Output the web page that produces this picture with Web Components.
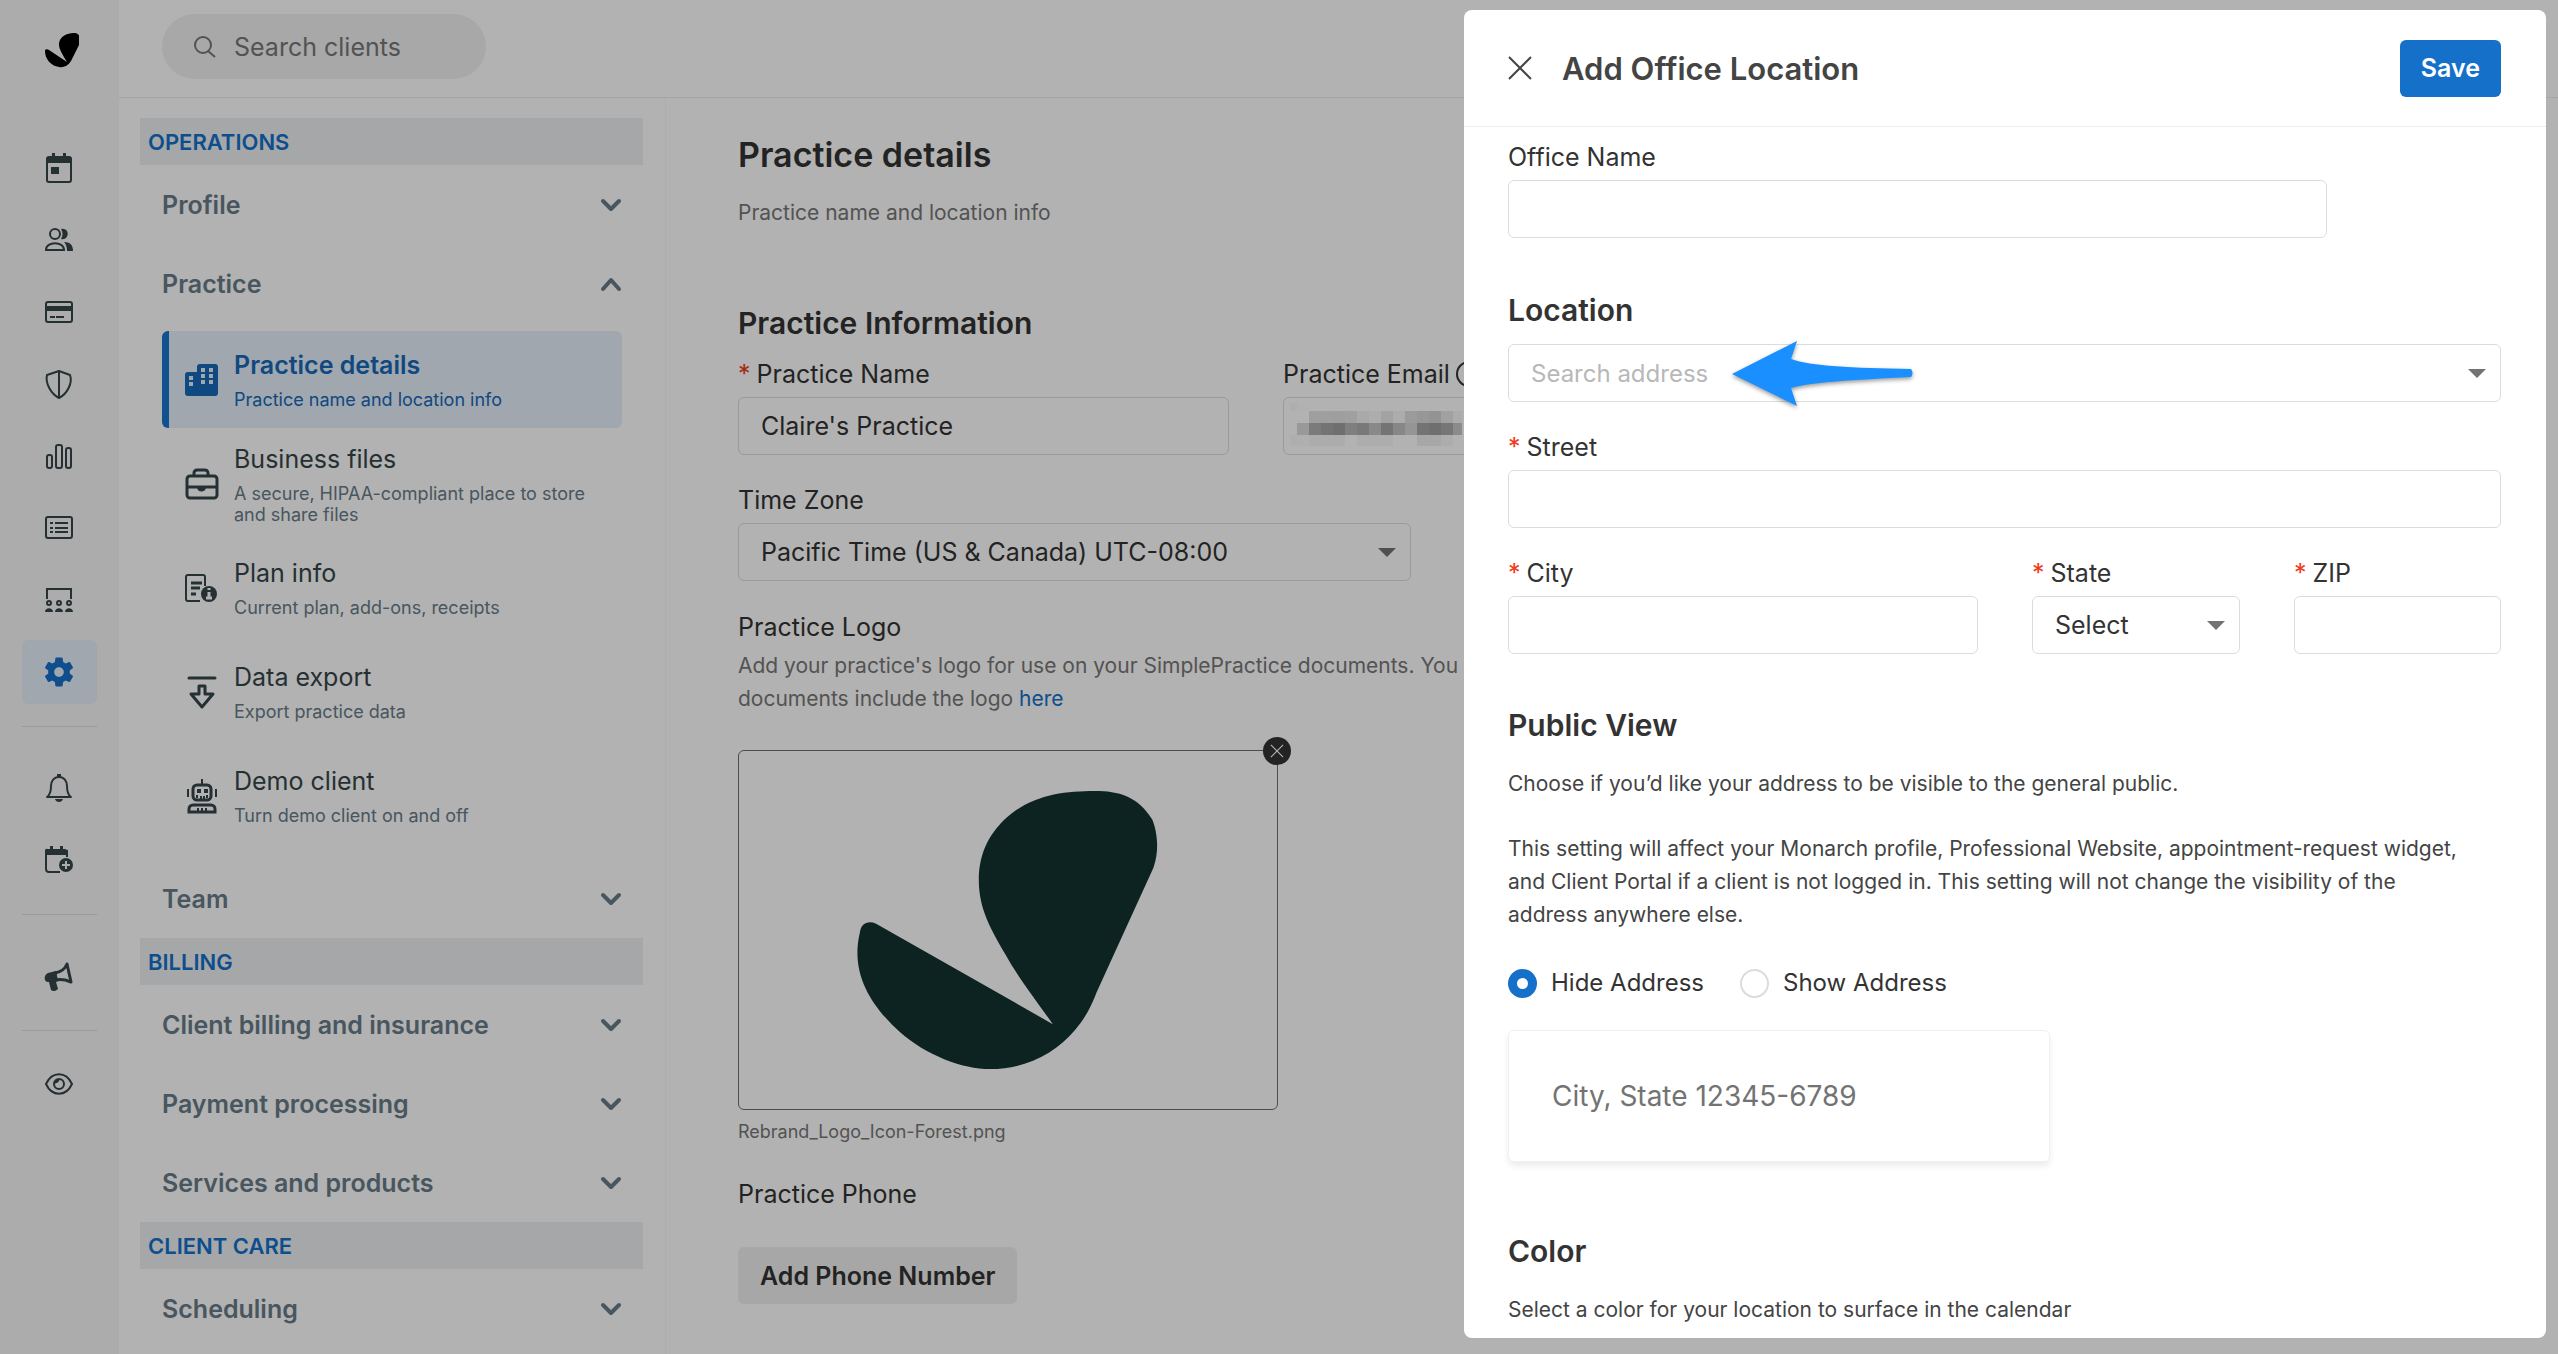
<!DOCTYPE html>
<html lang="en">
<head>
<meta charset="utf-8">
<title>Practice details</title>
<style>
  body {
    margin: 0;
    color: #333333;
    font-family: Inter, "Open Sans", sans-serif;
    font-size: 25px;
    line-height: 32px;
    overflow: hidden;
  }
</style>
</head>
<body>
<practice-app></practice-app>

<script>
const ICONS = {
  logo: '<path fill="#000" d="M2 19C2 17 4 17 6 18L24 30C18 20 14 14 17 8C20 2 27 1 32 1C37 2 39 7 36 13L28 29C25 34 20 36 16 35C8 34 2 27 2 19Z"/>',
  search: '<g fill="none" stroke="currentColor" stroke-width="2"><circle cx="16" cy="16" r="8"/><path d="M21 22l7 6"/></g>',
  calendar: '<path fill="currentColor" d="M8 6h20a3 3 0 0 1 3 3v4H5V9a3 3 0 0 1 3-3zM11 3h3v4h-3zM22 3h3v4h-3zM10 17h8v7h-8z"/><rect x="6" y="8" width="24" height="24" rx="2" fill="none" stroke="currentColor" stroke-width="2"/>',
  people: '<g fill="none" stroke="currentColor" stroke-width="2"><circle cx="14" cy="12" r="5"/><path d="M5 28c0-9 18-9 18 0z"/></g><path fill="currentColor" d="M20 7c9-2 9 12 0 10c2-3 2-7 0-10zM23 20c6 0 9 3 9 9h-6c0-4-1-7-3-9z"/>',
  card: '<rect x="5" y="8" width="26" height="20" rx="2" fill="none" stroke="currentColor" stroke-width="2"/><path fill="currentColor" d="M5 12h26v5H5zM9 22h5v2H9zM15 22h8v2h-8z"/>',
  shield: '<path fill="none" stroke="currentColor" stroke-width="2" stroke-linejoin="round" d="M18 5l11 4c3 8-3 19-11 23C10 28 4 17 6 9zM18 5v27"/>',
  bars: '<g fill="none" stroke="currentColor" stroke-width="2"><rect x="6" y="17" width="5" height="13" rx="2"/><rect x="15" y="7" width="6" height="23" rx="2"/><rect x="25" y="10" width="5" height="20" rx="2"/></g>',
  list: '<g fill="none" stroke="currentColor" stroke-width="2"><rect x="5" y="7" width="26" height="21" rx="2"/><path d="M9 13h3M9 18h3M9 22h3M14 13h13M14 18h13M14 22h13"/></g>',
  group: '<path fill="none" stroke="currentColor" stroke-width="2" d="M6 17V7h24v10"/><g fill="none" stroke="currentColor" stroke-width="2"><circle cx="8" cy="21" r="2"/><circle cx="18" cy="21" r="2"/><circle cx="28" cy="21" r="2"/></g><path fill="currentColor" d="M4 30c0-5 8-5 8 0zM14 30c0-5 8-5 8 0zM24 30c0-5 8-5 8 0z"/>',
  gear: '<path transform="scale(1.5)" fill="currentColor" d="M19.14 12.94c.04-.3.06-.61.06-.94 0-.32-.02-.64-.07-.94l2.03-1.58c.18-.14.23-.41.12-.61l-1.92-3.32c-.12-.22-.37-.29-.59-.22l-2.39.96c-.5-.38-1.03-.7-1.62-.94l-.36-2.54c-.04-.24-.24-.41-.48-.41h-3.84c-.24 0-.43.17-.47.41l-.36 2.54c-.59.24-1.13.57-1.62.94l-2.39-.96c-.22-.08-.47 0-.59.22L2.74 8.87c-.12.21-.08.47.12.61l2.03 1.58c-.05.3-.09.63-.09.94s.02.64.07.94l-2.03 1.58c-.18.14-.23.41-.12.61l1.92 3.32c.12.22.37.29.59.22l2.39-.96c.5.38 1.03.7 1.62.94l.36 2.54c.05.24.24.41.48.41h3.84c.24 0 .44-.17.47-.41l.36-2.54c.59-.24 1.13-.56 1.62-.94l2.39.96c.22.08.47 0 .59-.22l1.92-3.32c.12-.22.07-.47-.12-.61l-2.01-1.58zM12 15.2c-1.8 0-3.2-1.4-3.2-3.2s1.4-3.2 3.2-3.2 3.2 1.4 3.2 3.2-1.4 3.2-3.2 3.2z"/>',
  bell: '<path fill="none" stroke="currentColor" stroke-width="2" stroke-linejoin="round" d="M6 27c3-2 4-5 4-11c0-5 3-9 8-9s8 4 8 9c0 6 1 9 4 11z"/><path fill="currentColor" d="M16 4h4v3h-4zM14 29h8c-1 4-7 4-8 0z"/>',
  calendarAdd: '<path fill="none" stroke="currentColor" stroke-width="2" d="M19 30H8a3 3 0 0 1-3-3V9h21v6"/><path fill="currentColor" d="M7 7h17a2 2 0 0 1 2 2v4H4V9a2 2 0 0 1 3-2zM9 4h3v4H9zM19 4h3v4h-3z"/><circle cx="25" cy="23" r="7" fill="currentColor"/><path stroke="#f7f7f7" stroke-width="2" d="M25 19v8M21 23h8"/>',
  megaphone: '<path fill="none" stroke="currentColor" stroke-width="3" stroke-linejoin="round" d="M14 15c6-1 10-4 12-9l4 18c-5-2-10-3-15-2z"/><path fill="currentColor" d="M15 13l-8 2c-5 2-4 10 1 9l2 8c2 2 5 1 7-1l-2-7 2-1z"/>',
  eye: '<g fill="none" stroke="currentColor" stroke-width="2"><path d="M5 18c6-13 20-13 26 0c-6 13-20 13-26 0z"/><circle cx="18" cy="18" r="5"/></g><path fill="currentColor" d="M13 18c0-3 2-5 5-5c1 2-1 4-5 5z"/>',
  down: '<path fill="none" stroke="currentColor" stroke-width="4" stroke-linecap="round" stroke-linejoin="round" d="M10 14l8 8 8-8"/>',
  up: '<path fill="none" stroke="currentColor" stroke-width="4" stroke-linecap="round" stroke-linejoin="round" d="M10 23l8-9 8 9"/>',
  building: '<path fill="currentColor" fill-rule="evenodd" d="M4 10h9V5a3 3 0 0 1 3-3h15a3 3 0 0 1 3 3v26a3 3 0 0 1-3 3H4a3 3 0 0 1-3-3V13a3 3 0 0 1 3-3zM5 14v4h4v-4zM5 20v4h4v-4zM17 6v4h4V6zM25 6v4h4V6zM17 12v4h4v-4zM25 12v4h4v-4zM17 18v4h4v-4zM25 18v4h4v-4z"/>',
  briefcase: '<g fill="none" stroke="currentColor" stroke-width="3"><rect x="3" y="10" width="30" height="22" rx="3"/><path d="M10 10V7a3 3 0 0 1 3-3h8a3 3 0 0 1 3 3v3M3 21h30"/></g><path fill="currentColor" d="M13 21h9c0 6-9 6-9 0z"/>',
  plan: '<g fill="none" stroke="currentColor" stroke-width="2"><path d="M16 31H4a2 2 0 0 1-2-2V7a2 2 0 0 1 2-2h15a2 2 0 0 1 2 2v9"/><path stroke-width="3" d="M7 13h11M7 18h9M7 24h5"/></g><circle cx="25" cy="24" r="8" fill="currentColor"/><path stroke="#fff" stroke-width="3" d="M25 18v2M25 22v6M22 28h6"/>',
  download: '<g fill="none" stroke="currentColor" stroke-width="3" stroke-linecap="round" stroke-linejoin="round"><path d="M5 4h26M15 12h6v8h8L18 33 7 20h8z"/></g>',
  robot: '<g fill="none" stroke="currentColor" stroke-width="3"><path stroke-width="2" d="M18 1v5M4 11v8M32 11v8"/><rect x="9" y="7" width="18" height="15" rx="4"/><path d="M5 34v-3a4 4 0 0 1 4-4h18a4 4 0 0 1 4 4v3z"/><path stroke-width="2" d="M14 30v3M18 30v3M22 30v3M13 17v3M17 18v3M20 18v3M23 17v3"/></g><path fill="currentColor" d="M13 11h4v4h-4zM20 11h4v4h-4z"/>',
  close: '<path fill="none" stroke="currentColor" stroke-width="2" d="M7 7l22 22M29 7L7 29"/>',
  help: '<circle cx="18" cy="18" r="12" fill="none" stroke="currentColor" stroke-width="2"/><path fill="none" stroke="currentColor" stroke-width="2" d="M14 15c0-5 8-5 8 0c0 3-4 3-4 6M18 23v2"/>',
  caret: '<path fill="#737373" d="M9 14h18l-9 9z"/>'
};

// Shared by every element: shadow root, markup, styles
class BaseElement extends HTMLElement {
  setup( markup ) {
    if( this.shadowRoot ) {
      return;
    }

    const template = document.createElement( 'template' );
    template.innerHTML = `
      <style>
        *, *::before { box-sizing: border-box; }
        h1, h2, p { margin: 0; }
        a { color: #1570c9; text-decoration: none; }
        button, input, select { font: inherit; color: inherit; margin: 0; }
        button { border: 0; background: none; padding: 0; cursor: pointer; }
        :host { box-sizing: border-box; display: block; }
        :host( [hidden] ) { display: none; }
      </style>
      ${markup}
    `;
    this.attachShadow( {mode: 'open'} );
    this.shadowRoot.appendChild( template.content.cloneNode( true ) );
  }
}

class AppIcon extends BaseElement {
  connectedCallback() {
    this.setup( /* template */ `
      <style>
        :host { flex: none; width: 36px; height: 36px; }
        svg { display: block; width: 100%; height: 100%; }
      </style>
      <svg viewBox="0 0 36 36" aria-hidden="true">${ICONS[this.getAttribute( 'name' )]}</svg>
    ` );
  }
}

class IconRail extends BaseElement {
  connectedCallback() {
    const link = ( icon, label, active ) =>
      `<a href="#${icon}" aria-label="${label}" ${active ? 'class="active"' : ''}><app-icon name="${icon}"></app-icon></a>`;

    this.setup( /* template */ `
      <style>
        :host { background: #f7f7f7; padding: 32px 22px; }
        nav { display: flex; flex-direction: column; gap: 8px; }
        a {
          align-items: center;
          border-radius: 6px;
          color: #36454a;
          display: flex;
          height: 64px;
          justify-content: center;
          padding-right: 1px;
        }
        a.active { background: #e6f0f9; color: #1570c9; }
        a.logo { align-items: flex-start; height: 96px; padding-left: 4px; }
        hr { border: 0; border-top: 1px solid #dcdcdc; margin: 14px 0 21px; width: 100%; }
        hr.last { margin-bottom: 13px; }
      </style>
      <nav>
        <a class="logo" href="#home" aria-label="Home"><app-icon name="logo"></app-icon></a>
        ${link( 'calendar', 'Calendar' )}
        ${link( 'people', 'Clients' )}
        ${link( 'card', 'Billing' )}
        ${link( 'shield', 'Insurance' )}
        ${link( 'bars', 'Analytics' )}
        ${link( 'list', 'Activity' )}
        ${link( 'group', 'Supervision' )}
        ${link( 'gear', 'Settings', true )}
        <hr>
        ${link( 'bell', 'Reminders' )}
        ${link( 'calendarAdd', 'Requests' )}
        <hr>
        ${link( 'megaphone', 'Marketing' )}
        <hr class="last">
        ${link( 'eye', 'Visibility' )}
      </nav>
    ` );
  }
}

class TopBar extends BaseElement {
  connectedCallback() {
    this.setup( /* template */ `
      <style>
        :host { border-bottom: 1px solid #ededed; height: 98px; padding: 14px 43px; }
        label {
          align-items: center;
          background: #f1f1f1;
          border-radius: 33px;
          color: #777777;
          display: flex;
          gap: 11px;
          height: 65px;
          padding: 0 24px 0 25px;
          width: 324px;
        }
        input { background: none; border: 0; min-width: 0; outline: 0; padding: 0; width: 100%; }
        input::placeholder { color: #777777; opacity: 1; }
      </style>
      <label><app-icon name="search"></app-icon><input type="search" placeholder="Search clients" aria-label="Search clients"></label>
    ` );
  }
}

class NavSection extends BaseElement {
  connectedCallback() {
    this.setup( /* template */ `
      <style>
        h2 {
          background: #eef0f3;
          color: #1570c9;
          font-size: 22px;
          font-weight: 600;
          line-height: 45px;
          padding: 2px 8px 0;
        }
      </style>
      <h2>${this.getAttribute( 'label' )}</h2>
      <slot></slot>
    ` );
  }
}

class NavGroup extends BaseElement {
  connectedCallback() {
    const open = this.hasAttribute( 'open' );

    this.setup( /* template */ `
      <style>
        :host { padding: 0 21px 0 22px; }
        button {
          align-items: center;
          color: #687b88;
          display: flex;
          font-weight: 600;
          height: 79px;
          justify-content: space-between;
          width: 100%;
        }
        .items { display: flex; flex-direction: column; gap: 7px; padding: 8px 0 15px; }
        app-icon { margin-right: -7px; }
      </style>
      <button type="button" aria-expanded="${open}">${this.getAttribute( 'label' )}<app-icon name="${open ? 'up' : 'down'}"></app-icon></button>
      ${open ? '<div class="items"><slot></slot></div>' : ''}
    ` );
  }
}

class NavItem extends BaseElement {
  connectedCallback() {
    this.setup( /* template */ `
      <style>
        a {
          align-items: center;
          border-left: 7px solid transparent;
          border-radius: 6px;
          color: #36454a;
          display: flex;
          gap: 14px;
          height: 97px;
          padding: 0 14px 0 15px;
        }
        small { color: #687b88; display: block; font-size: 18px; line-height: 21px; padding-top: 8px; }
        :host( [active] ) a { background: #e6f0f9; border-color: #1b75cf; color: #1768b8; }
        :host( [active] ) strong { font-weight: 600; }
        :host( [active] ) small { color: #1768b8; }
        strong { display: block; font-weight: 400; }
      </style>
      <a href="#${this.getAttribute( 'icon' )}">
        <app-icon name="${this.getAttribute( 'icon' )}"></app-icon>
        <span><strong>${this.getAttribute( 'label' )}</strong><small><slot></slot></small></span>
      </a>
    ` );
  }
}

class SettingsNav extends BaseElement {
  connectedCallback() {
    this.setup( /* template */ `
      <style>
        :host { border-right: 1px solid #f7f7f7; padding: 20px 22px 0 21px; }
      </style>
      <nav>
        <nav-section label="OPERATIONS">
          <nav-group label="Profile"></nav-group>
          <nav-group label="Practice" open>
            <nav-item icon="building" label="Practice details" active>Practice name and location info</nav-item>
            <nav-item icon="briefcase" label="Business files">A secure, HIPAA-compliant place to store and share files</nav-item>
            <nav-item icon="plan" label="Plan info">Current plan, add-ons, receipts</nav-item>
            <nav-item icon="download" label="Data export">Export practice data</nav-item>
            <nav-item icon="robot" label="Demo client">Turn demo client on and off</nav-item>
          </nav-group>
          <nav-group label="Team"></nav-group>
        </nav-section>
        <nav-section label="BILLING">
          <nav-group label="Client billing and insurance"></nav-group>
          <nav-group label="Payment processing"></nav-group>
          <nav-group label="Services and products"></nav-group>
        </nav-section>
        <nav-section label="CLIENT CARE">
          <nav-group label="Scheduling"></nav-group>
        </nav-section>
      </nav>
    ` );
  }
}

// Label with a text box or a drop-down
// Slotted content lies over the control
class FormField extends BaseElement {
  connectedCallback() {
    const label = this.getAttribute( 'label' );
    const value = this.getAttribute( 'value' ) || '';
    const hint = this.getAttribute( 'placeholder' ) || '';
    const select = this.hasAttribute( 'select' );
    const caret = select || this.hasAttribute( 'combo' );

    this.setup( /* template */ `
      <style>
        :host { min-width: 0; }
        label { align-items: center; display: flex; margin-bottom: 7px; white-space: nowrap; }
        label app-icon { margin-left: 1px; margin-block: -2px; }
        i { color: #f03a17; font-style: normal; margin-right: 6px; }
        .box { position: relative; }
        input, select {
          appearance: none;
          background: #ffffff;
          border: 1px solid #dcdcdc;
          border-radius: 6px;
          display: block;
          height: 58px;
          padding: 0 22px;
          width: 100%;
        }
        input::placeholder { color: #b8b8b8; font-size: 24px; opacity: 1; }
        .caret { pointer-events: none; position: absolute; right: 6px; top: 11px; }
      </style>
      ${label ? `<label for="control">${this.hasAttribute( 'required' ) ? '<i>*</i>' : ''}${label}${this.hasAttribute( 'help' ) ? '<app-icon name="help"></app-icon>' : ''}</label>` : ''}
      <div class="box">
        ${select
          ? `<select id="control"><option>${value}</option></select>`
          : `<input id="control" type="text" value="${value}" placeholder="${hint}" ${label ? '' : `aria-label="${hint}"`}>`}
        ${caret ? '<app-icon class="caret" name="caret"></app-icon>' : ''}
        <slot></slot>
      </div>
    ` );
  }
}

// Mosaic that hides a private value
class RedactedValue extends BaseElement {
  connectedCallback() {
    const columns = [0, 7, 19, 31, 43, 55, 67, 79, 91, 103, 115, 127, 139, 151, 163, 172];
    const rows = [
      [0, 8, [250, 254, 255, 255, 255, 255, 255, 255, 255, 255, 255, 255, 255, 255, 255]],
      [8, 12, [255, 255, 228, 228, 226, 230, 243, 248, 234, 246, 222, 217, 211, 231, 246]],
      [20, 12, [255, 220, 177, 166, 160, 183, 174, 197, 166, 194, 214, 166, 160, 169, 200]],
      [32, 11, [249, 251, 246, 246, 246, 255, 248, 248, 248, 255, 255, 240, 240, 248, 255]]
    ];
    const cells = rows.map( ( [y, height, shades] ) => shades.map( ( shade, index ) =>
      `<rect x="${columns[index]}" y="${y}" width="${columns[index + 1] - columns[index]}" height="${height}" fill="rgb(${shade},${shade},${shade})"/>`
    ).join( '' ) ).join( '' );

    this.setup( /* template */ `
      <style>
        :host { left: 7px; position: absolute; top: 6px; }
        svg { display: block; height: 43px; width: 172px; }
      </style>
      <svg viewBox="0 0 172 43" shape-rendering="crispEdges" aria-hidden="true">${cells}</svg>
    ` );
  }
}

class LogoPreview extends BaseElement {
  connectedCallback() {
    this.setup( /* template */ `
      <style>
        figure { margin: 0; position: relative; width: 540px; }
        svg.art { border: 1px solid #6e6e6e; border-radius: 6px; display: block; height: 360px; width: 100%; }
        figcaption { color: #777777; font-size: 18px; line-height: 24px; margin-top: 10px; }
        button {
          background: #333333;
          border-radius: 50%;
          color: #ffffff;
          display: grid;
          height: 28px;
          place-items: center;
          position: absolute;
          right: -13px;
          top: -13px;
          width: 28px;
        }
        button app-icon { height: 20px; width: 20px; }
      </style>
      <figure>
        <svg class="art" viewBox="150 376 1032 709" preserveAspectRatio="none" role="img" aria-label="Practice logo">
          <path fill="#143330" d="M382 735C384 718 397 711 413 718L752 917C715 863 685 824 660 777C635 732 610 690 610 632C610 572 635 535 663 508C712 463 772 455 833 455C878 455 915 465 943 512C952 535 957 573 945 607L836 854C824 886 815 903 795 928C756 976 698 1006 632 1006C578 1006 508 978 458 932C407 884 362 819 382 735Z"/>
        </svg>
        <button type="button" aria-label="Remove logo"><app-icon name="close"></app-icon></button>
        <figcaption>Rebrand_Logo_Icon-Forest.png</figcaption>
      </figure>
    ` );
  }
}

class PracticeDetails extends BaseElement {
  connectedCallback() {
    this.setup( /* template */ `
      <style>
        :host { padding: 35px 73px 0 72px; }
        h1 { font-size: 34px; font-weight: 600; line-height: 44px; }
        h2 { font-size: 30px; font-weight: 600; line-height: 40px; margin: 74px 0 15px; }
        .note { color: #777777; font-size: 21px; line-height: 33px; }
        h1 + .note { margin-top: 19px; }
        .pair { display: grid; gap: 54px; grid-template-columns: 491px 491px; }
        .zone { margin: 29px 0 30px; width: 673px; }
        .desc { margin: 6px 0 35px; white-space: nowrap; }
        .phone { margin: 34px 0 37px; }
        button {
          background: #f0f0f0;
          border-radius: 6px;
          font-weight: 600;
          height: 57px;
          padding: 0 22px;
        }
      </style>
      <h1>Practice details</h1>
      <p class="note">Practice name and location info</p>
      <h2>Practice Information</h2>
      <div class="pair">
        <form-field label="Practice Name" value="Claire's Practice" required></form-field>
        <form-field label="Practice Email" help><redacted-value></redacted-value></form-field>
      </div>
      <form-field class="zone" label="Time Zone" value="Pacific Time (US &amp; Canada) UTC-08:00" select></form-field>
      <p>Practice Logo</p>
      <p class="note desc">Add your practice's logo for use on your SimplePractice documents. You<br>documents include the logo <a href="#logo">here</a></p>
      <logo-preview></logo-preview>
      <p class="phone">Practice Phone</p>
      <button type="button">Add Phone Number</button>
    ` );
  }
}

class RadioOption extends BaseElement {
  connectedCallback() {
    this.setup( /* template */ `
      <style>
        label { align-items: center; display: flex; font-size: 24px; gap: 14px; }
        input {
          appearance: none;
          border: 2px solid #dcdcdc;
          border-radius: 50%;
          height: 29px;
          width: 29px;
        }
        input:checked { border: 9px solid #1570c9; }
      </style>
      <label><input type="radio" name="visibility" ${this.hasAttribute( 'checked' ) ? 'checked' : ''}><slot></slot></label>
    ` );
  }
}

class CalloutArrow extends BaseElement {
  connectedCallback() {
    this.setup( /* template */ `
      <style>
        :host { left: 223px; position: absolute; top: -4px; }
        svg { display: block; filter: drop-shadow( 0 2px 2px rgba( 0, 0, 0, .4 ) ); height: 70px; width: 184px; }
      </style>
      <svg viewBox="0 0 184 70" aria-hidden="true">
        <path fill="#1a8fff" d="M1 34L66 1L60 19C80 26 120 28 180 29Q183 33 180 37C120 40 80 42 60 48L66 66Z"/>
      </svg>
    ` );
  }
}

class LocationDrawer extends BaseElement {
  connectedCallback() {
    this.setup( /* template */ `
      <style>
        :host {
          background: #ffffff;
          border-radius: 8px;
          bottom: 16px;
          max-width: calc( 100vw - 24px );
          overflow: hidden;
          position: fixed;
          right: 12px;
          top: 10px;
          width: 1082px;
        }
        header {
          align-items: center;
          border-bottom: 1px solid #ededed;
          color: #444444;
          display: flex;
          height: 117px;
          padding: 0 45px 0 38px;
        }
        header h2 { flex: 1; font-size: 31px; margin: 0 0 0 24px; padding-top: 2px; }
        header button { height: 36px; }
        header .save {
          background: #1570c9;
          border-radius: 6px;
          color: #ffffff;
          font-weight: 600;
          height: 57px;
          padding: 0 21px;
        }
        form { padding: 14px 45px 0 44px; }
        h2 { font-size: 30px; font-weight: 600; line-height: 40px; }
        p { color: #444444; font-size: 21px; line-height: 33px; max-width: 970px; }
        .name { margin-bottom: 52px; width: 819px; }
        .search { margin: 14px 0 29px; }
        .city { display: grid; gap: 54px; grid-template-columns: 1fr 208px 207px; margin: 29px 0 51px; }
        .lead { margin: 22px 0 32px; }
        fieldset { border: 0; display: flex; gap: 36px; margin: 36px 0 31px; padding: 0; }
        .card {
          border: 1px solid #f0f0f0;
          border-radius: 6px;
          box-shadow: 0 4px 6px rgba( 0, 0, 0, .08 );
          color: #737373;
          font-size: 28px;
          line-height: 130px;
          margin-bottom: 69px;
          padding: 0 43px;
          width: 542px;
        }
        .last { margin-top: 22px; }
      </style>
      <header>
        <button type="button" aria-label="Close"><app-icon name="close"></app-icon></button>
        <h2>Add Office Location</h2>
        <button class="save" type="button">Save</button>
      </header>
      <form>
        <form-field class="name" label="Office Name"></form-field>
        <h2>Location</h2>
        <form-field class="search" placeholder="Search address" combo><callout-arrow></callout-arrow></form-field>
        <form-field label="Street" required></form-field>
        <div class="city">
          <form-field label="City" required></form-field>
          <form-field label="State" value="Select" required select></form-field>
          <form-field label="ZIP" required></form-field>
        </div>
        <h2>Public View</h2>
        <p class="lead">Choose if you’d like your address to be visible to the general public.</p>
        <p>This setting will affect your Monarch profile, Professional Website, appointment-request widget, and Client Portal if a client is not logged in. This setting will not change the visibility of the address anywhere else.</p>
        <fieldset>
          <radio-option checked>Hide Address</radio-option>
          <radio-option>Show Address</radio-option>
        </fieldset>
        <div class="card">City, State 12345-6789</div>
        <h2>Color</h2>
        <p class="last">Select a color for your location to surface in the calendar</p>
      </form>
    ` );
  }
}

class PracticeApp extends BaseElement {
  connectedCallback() {
    this.setup( /* template */ `
      <style>
        :host {
          display: grid;
          grid-template-columns: 119px 1fr;
          height: 100vh;
          overflow: hidden;
        }
        .page { display: grid; grid-template-columns: 547px 1fr; grid-template-rows: auto 1fr; min-width: 0; }
        top-bar { grid-column: 1 / -1; }
        practice-details { min-width: 0; }
        .scrim { background: rgba( 0, 0, 0, .3 ); inset: 0; position: fixed; }
      </style>
      <icon-rail></icon-rail>
      <div class="page">
        <top-bar></top-bar>
        <settings-nav></settings-nav>
        <practice-details></practice-details>
      </div>
      <div class="scrim"></div>
      <location-drawer></location-drawer>
    ` );
  }
}

window.customElements.define( 'app-icon', AppIcon );
window.customElements.define( 'icon-rail', IconRail );
window.customElements.define( 'top-bar', TopBar );
window.customElements.define( 'nav-section', NavSection );
window.customElements.define( 'nav-group', NavGroup );
window.customElements.define( 'nav-item', NavItem );
window.customElements.define( 'settings-nav', SettingsNav );
window.customElements.define( 'form-field', FormField );
window.customElements.define( 'redacted-value', RedactedValue );
window.customElements.define( 'logo-preview', LogoPreview );
window.customElements.define( 'practice-details', PracticeDetails );
window.customElements.define( 'radio-option', RadioOption );
window.customElements.define( 'callout-arrow', CalloutArrow );
window.customElements.define( 'location-drawer', LocationDrawer );
window.customElements.define( 'practice-app', PracticeApp );
</script>
</body>
</html>
